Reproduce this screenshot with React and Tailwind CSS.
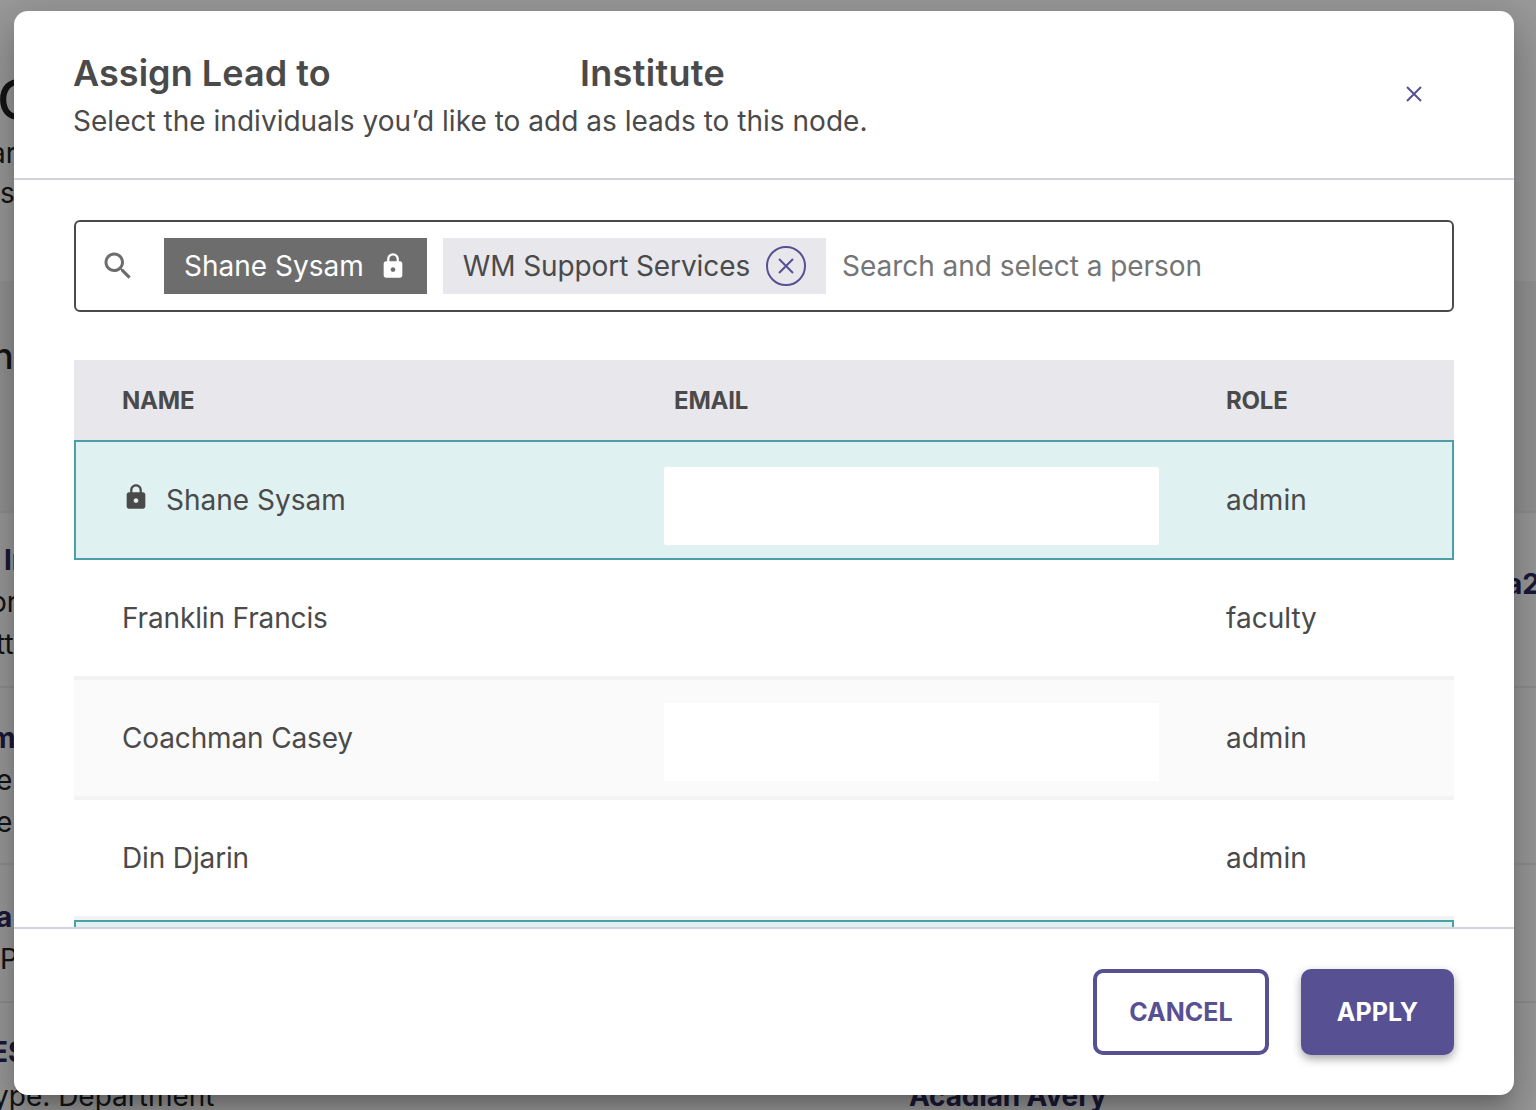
const LOCK = 'M18 8h-1V6c0-2.76-2.24-5-5-5S7 3.24 7 6v2H6c-1.1 0-2 .9-2 2v10c0 1.1.9 2 2 2h12c1.1 0 2-.9 2-2V10c0-1.1-.9-2-2-2zm-6 9c-1.1 0-2-.9-2-2s.9-2 2-2 2 .9 2 2-.9 2-2 2zm3.1-9H8.9V6c0-1.71 1.39-3.1 3.1-3.1 1.71 0 3.1 1.39 3.1 3.1v2z';
const SEARCH = 'M15.5 14h-.79l-.28-.27C15.41 12.59 16 11.11 16 9.5 16 5.91 13.09 3 9.5 3S3 5.91 3 9.5 5.91 16 9.5 16c1.61 0 3.09-.59 4.23-1.57l.27.28v.79l5 4.99L20.49 19l-4.99-5zm-6 0C7.01 14 5 11.99 5 9.5S7.01 5 9.5 5 14 7.01 14 9.5 11.99 14 9.5 14z';

function Lock({ className }) {
  return (
    <svg className={className} viewBox="0 0 24 24" fill="currentColor">
      <path d={LOCK} />
    </svg>
  );
}

function Cross({ className }) {
  return (
    <svg className={className} viewBox="0 0 16 16" fill="none" stroke="currentColor" strokeWidth="2">
      <path d="M1 1l14 14M15 1L1 15" />
    </svg>
  );
}

// the page behind the dialog, only its edges show
function BackgroundPage() {
  return (
    <div className="h-[1110px] overflow-hidden bg-white text-[28px] text-[#222]">
      <div className="h-[281px] pt-[62px] leading-[40px]">
        <div className="-ml-[3px] text-[56px] leading-[76px] font-medium">C</div>
        <div className="-ml-[10px] -mt-[5px]">ar</div>
        <div className="ml-0">s</div>
      </div>
      <div className="h-[232px] bg-[#f4f4f4] border-b-2 border-[#eeeeee] pt-[50px]">
        <div className="-ml-[8px] text-[36px] leading-[50px] font-medium">n</div>
      </div>
      <div className="h-[175px] border-b-2 border-[#eeeeee] pt-[26px] leading-[42px] relative">
        <div className="ml-[4px] font-bold text-[#2d2a5e]">In</div>
        <div className="-ml-[10px]">or</div>
        <div className="-ml-[4px]">tt</div>
        <div className="absolute top-[50px] right-[-4px] font-bold text-[#2d2a5e]">a2</div>
      </div>
      <div className="h-[177px] border-b-2 border-[#eeeeee] pt-[29px] leading-[42px]">
        <div className="-ml-[10px] font-bold text-[#2d2a5e]">m</div>
        <div className="-ml-[4px]">e</div>
        <div className="-ml-[4px]">e</div>
      </div>
      <div className="h-[138px] border-b-2 border-[#eeeeee] pt-[31px] leading-[42px]">
        <div className="-ml-[4px] font-bold text-[#2d2a5e]">a</div>
        <div className="ml-0">P</div>
      </div>
      <div className="pt-[27px] leading-[44px]">
        <div className="-ml-[9px] font-bold text-[#2d2a5e]">ES</div>
        <div className="flex">
          <div className="-ml-[7px] w-[916px]">ype. Department</div>
          <div className="font-bold text-[#2d2a5e] tracking-[-0.15px]">Acadian Avery</div>
        </div>
      </div>
    </div>
  );
}

function Row({ name, role, locked, redacted, striped }) {
  return (
    <div
      className={`grid grid-cols-[552px_552px_276px] items-center shrink-0 ${
        locked
          ? 'h-[120px] bg-[#dff1f1] border-2 border-[#4ba0a8]'
          : `h-[120px] border-b-4 border-[#f3f3f3] ${striped ? 'bg-[#fafafa]' : 'bg-white'}`
      }`}
    >
      <div className={`flex items-center pl-[48px] ${locked ? 'gap-[18px]' : 'tracking-[-0.14px]'}`}>
        {locked && <Lock className="w-[28px] h-[28px] -mt-[6px] -mx-[2px] text-[#4a4a4a]" />}
        <span>{name}</span>
      </div>
      <div className={locked ? 'pl-[36px]' : 'pl-[38px]'}>
        {redacted && (
          <div className={`w-[495px] h-[78px] bg-white rounded-[2px] ${locked ? 'mt-[12px]' : 'mt-[8px]'}`} />
        )}
      </div>
      <div className={locked ? 'pl-[46px]' : 'pl-[48px]'}>{role}</div>
    </div>
  );
}

export default function App() {
  return (
    <div className="relative h-[1110px] w-[1536px] overflow-hidden font-['Inter',sans-serif] text-[#4a4a4a]">
      <BackgroundPage />
      <div className="absolute inset-0 bg-black/40" />

      <div className="absolute left-[14px] top-[11px] w-[1500px] h-[1084px] flex flex-col rounded-[14px] bg-white text-[28px] shadow-[0_24px_38px_3px_rgba(0,0,0,0.14),0_9px_46px_8px_rgba(0,0,0,0.12),0_11px_15px_-7px_rgba(0,0,0,0.2)]">
        {/* Header */}
        <div className="h-[169px] shrink-0 border-b-2 border-[#d2d2da] pl-[60px] pr-[92px] pt-[38px] flex justify-between">
          <div className="-ml-[1px]">
            <h2 className="flex text-[36px] leading-[48px] font-semibold">
              <span className="w-[507px] tracking-[0.05px]">Assign Lead to</span>
              <span className="tracking-[0.3px]">Institute</span>
            </h2>
            <p className="leading-[48px] tracking-[0.02px]">Select the individuals you’d like to add as leads to this node.</p>
          </div>
          <button className="self-start mt-[37px] text-[#575093]">
            <Cross className="w-[16px] h-[16px]" />
          </button>
        </div>

        {/* Body */}
        <div className="flex-1 min-h-0 overflow-hidden px-[60px] pt-[40px] flex flex-col">
          <div className="h-[92px] shrink-0 flex items-center border-2 border-[#4a4a4a] rounded-[6px] pl-[24px]">
            <svg className="w-[36px] h-[36px] text-[#6d6d6d]" viewBox="0 0 24 24" fill="currentColor">
              <path d={SEARCH} />
            </svg>
            <div className="ml-[28px] h-[56px] flex items-center gap-[19px] pl-[20px] pr-[24px] bg-[#6d6d6d] text-white">
              <span>Shane Sysam</span>
              <Lock className="w-[28px] h-[28px] -mx-[4px]" />
            </div>
            <div className="ml-[16px] h-[56px] flex items-center gap-[16px] pl-[20px] pr-[20px] bg-[#e7e7ec]">
              <span className="tracking-[-0.1px]">WM Support Services</span>
              <span className="w-[40px] h-[40px] flex items-center justify-center rounded-full border-2 border-[#575093] text-[#575093]">
                <Cross className="w-[16px] h-[16px]" />
              </span>
            </div>
            <span className="ml-[16px] text-[#757575] tracking-[-0.04px]">Search and select a person</span>
          </div>

          <div className="mt-[48px] h-[80px] pt-[2px] shrink-0 grid grid-cols-[552px_552px_276px] items-center bg-[#e7e7ec] text-[24px] font-bold tracking-[-0.2px]">
            <div className="pl-[48px]">NAME</div>
            <div className="pl-[48px]">EMAIL</div>
            <div className="pl-[48px]">ROLE</div>
          </div>

          <Row name="Shane Sysam" role="admin" locked redacted />
          <Row name="Franklin Francis" role="faculty" />
          <Row name="Coachman Casey" role="admin" redacted striped />
          <Row name="Din Djarin" role="admin" />
          <div className="h-[40px] shrink-0 bg-[#dff1f1] border-2 border-[#4ba0a8]" />
        </div>

        {/* Footer */}
        <div className="h-[168px] shrink-0 border-t-2 border-[#d2d2da] pr-[60px] flex items-center justify-end gap-[32px]">
          <button className="w-[176px] h-[86px] pt-[2px] rounded-[10px] border-4 border-[#575093] text-[#575093] text-[25px] font-bold">
            CANCEL
          </button>
          <button className="w-[153px] h-[86px] pt-[2px] rounded-[10px] bg-[#575093] text-white text-[25px] font-bold shadow-[0_4px_10px_rgba(0,0,0,0.35)]">
            APPLY
          </button>
        </div>
      </div>
    </div>
  );
}
